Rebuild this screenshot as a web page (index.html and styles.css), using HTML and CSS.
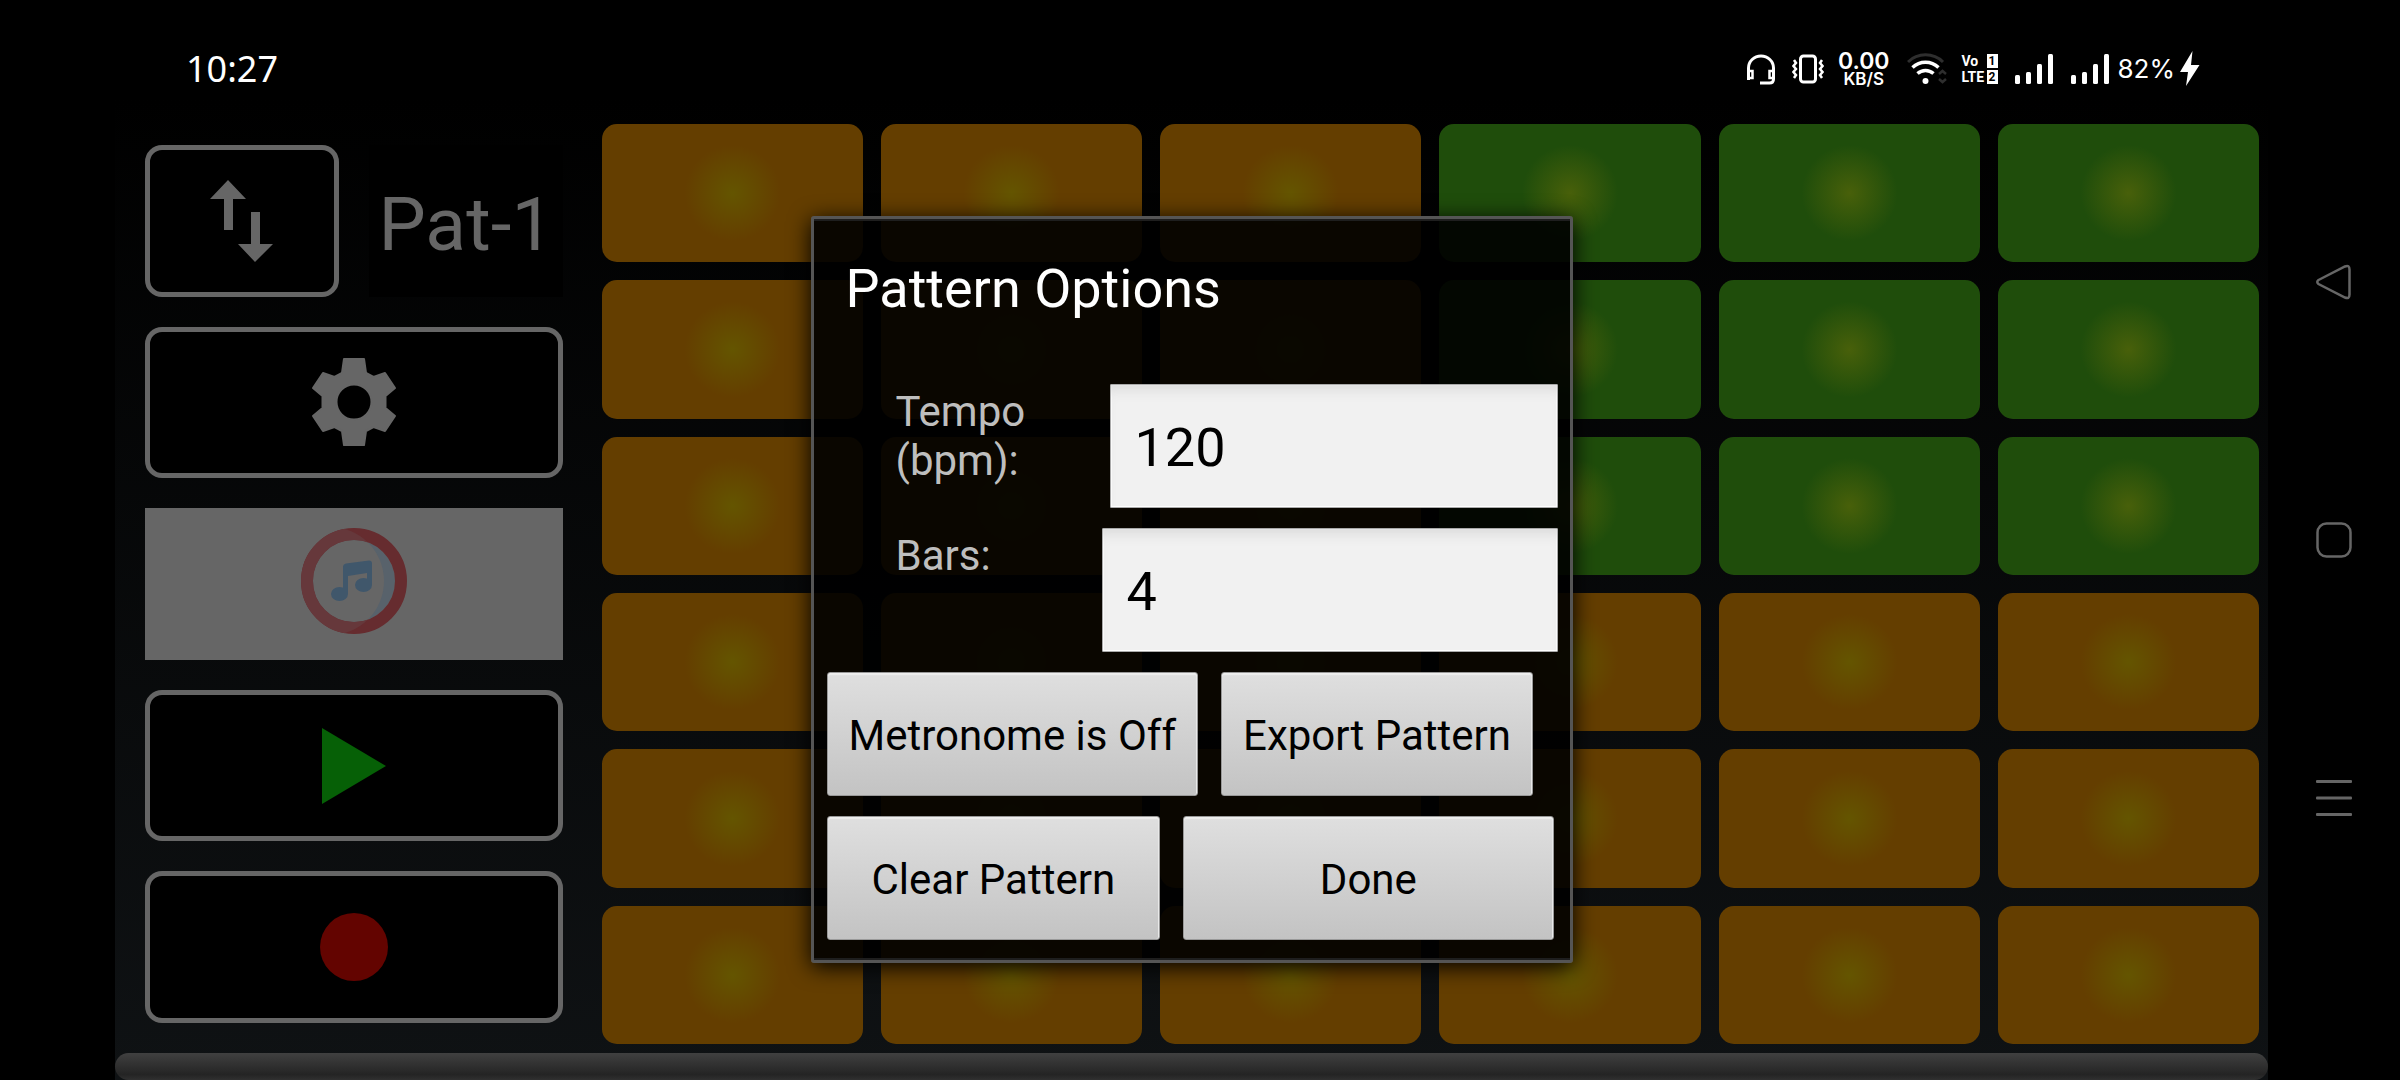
FILE: index.html
```html
<!DOCTYPE html>
<html lang="en">
<head>
<meta charset="utf-8">
<meta name="viewport" content="width=device-width, initial-scale=1">
<title>Pattern Options</title>
<link rel="stylesheet" href="styles.css">
</head>
<body>
<div class="phone">
  <header class="status">
    <time class="clock">10:27</time>
    <div class="indicators">
      <svg class="ind-headset" width="30" height="32" viewBox="0 0 30 32" fill="none" stroke="#fff" stroke-width="3">
        <path d="M2.500 27V15a12.500 12 0 0 1 25 0v11q0 4-4 4H14"/>
        <path d="M2.500 18h4v7h-4zM27.500 18h-4v7h4z" stroke-width="2.500"/>
      </svg>
      <svg class="ind-vibrate" width="32" height="30" viewBox="0 0 32 30" fill="none" stroke="#fff">
        <rect x="8.500" y="2" width="15" height="26" rx="3" stroke-width="3"/>
        <path d="M2 6l2 3-2.500 3L4 15l-2.500 3L4 21l-2 3M30 6l-2 3 2.500 3L28 15l2.500 3L28 21l2 3" stroke-width="2.500"/>
      </svg>
      <div class="speed"><span class="speed-value">0.00</span><span class="speed-unit">KB/S</span></div>
      <svg class="ind-wifi" width="40" height="32" viewBox="0 0 40 32" fill="none" stroke="#fff" stroke-width="3">
        <path d="M1 9a25 25 0 0 1 35 0" stroke="#2e2e2e"/>
        <path d="M5.500 14.500a19 19 0 0 1 26 0" stroke-width="3.500"/>
        <path d="M10.500 20.500a12 12 0 0 1 16 0" stroke-width="3.500"/>
        <circle cx="18.500" cy="28" r="3" fill="#fff" stroke="none"/>
        <path d="M32 21l3.500-3 3.500 3M32 26l3.500 3 3.500-3" stroke="#2e2e2e" stroke-width="2.500"/>
      </svg>
      <div class="volte">
        <span>Vo</span><span class="sim">1</span>
        <span>LTE</span><span class="sim">2</span>
      </div>
      <svg class="ind-signal" width="38" height="30" viewBox="0 0 38 30" fill="#fff">
        <rect y="21" width="5" height="9" rx="1.500"/><rect x="11" y="18" width="5" height="12" rx="1.500"/><rect x="22" y="10" width="5" height="20" rx="1.500"/><rect x="33" width="5" height="30" rx="1.500"/>
      </svg>
      <svg class="ind-signal" width="38" height="30" viewBox="0 0 38 30" fill="#fff">
        <rect y="21" width="5" height="9" rx="1.500"/><rect x="11" y="18" width="5" height="12" rx="1.500"/><rect x="22" y="10" width="5" height="20" rx="1.500"/><rect x="33" width="5" height="30" rx="1.500"/>
      </svg>
      <span class="battery">82%</span>
      <svg width="20" height="36" viewBox="0 0 20 36" fill="#fff"><path d="M12.500 0L0 21h8L6 35 19.500 14H11z"/></svg>
    </div>
  </header>

  <main class="app">
    <div class="board">
      <aside class="tools">
        <div class="tool-pair">
          <button class="tool" type="button" aria-label="Switch pattern">
            <svg width="70" height="90" viewBox="0 0 70 90" fill="#666"><path d="M21 4l18 19H26v31h-9V23H3zM44 36h9v32h13L48 86 31 68h13z"/></svg>
          </button>
          <div class="pattern-name">Pat-1</div>
        </div>
        <button class="tool" type="button" aria-label="Settings">
          <svg width="90" height="90" viewBox="-45 -45 90 90"><path fill="#666" fill-rule="evenodd" stroke="#666" stroke-width="2" stroke-linejoin="round" d="M-10-43H10L12-29 19.500-25 31-29 41-14 31.500-6V6L41 14 31 29 19.500 25 12 29 10 43H-10L-12 29-19.500 25-31 29-41 14-31.500 6V-6L-41-14-31-29-19.500-25-12-29zM17.500 0A17.500 17.500 0 1 0-17.500 0A17.500 17.500 0 1 0 17.500 0z"/></svg>
        </button>
        <button class="tool tool-music" type="button" aria-label="Songs">
          <svg width="106" height="112" viewBox="0 0 106 112">
            <defs><clipPath id="lit"><circle cx="29" cy="53" r="54"/></clipPath></defs>
            <circle cx="53" cy="53" r="41" fill="#58626b"/>
            <circle cx="53" cy="53" r="47" fill="none" stroke="#662c2f" stroke-width="12"/>
            <g clip-path="url(#lit)">
              <circle cx="53" cy="53" r="41" fill="#666"/>
              <circle cx="53" cy="53" r="47" fill="none" stroke="#66383b" stroke-width="12"/>
            </g>
            <g fill="#40576b">
              <ellipse cx="38.500" cy="66" rx="8.500" ry="7"/>
              <ellipse cx="62.500" cy="57" rx="8.500" ry="7"/>
              <path d="M42 66V39q0-3 3-3.500l23-3q3 0 3 3V57h-5V45l-19 3v18z"/>
            </g>
          </svg>
        </button>
        <button class="tool" type="button" aria-label="Play">
          <svg width="64" height="76" viewBox="0 0 64 76"><path fill="#066006" d="M0 0l64 38L0 76z"/></svg>
        </button>
        <button class="tool" type="button" aria-label="Record">
          <svg width="68" height="68" viewBox="0 0 68 68"><circle cx="34" cy="34" r="34" fill="#630400"/></svg>
        </button>
      </aside>

      <div class="pads">
        <i class="pad"></i><i class="pad"></i><i class="pad"></i><i class="pad green"></i><i class="pad green"></i><i class="pad green"></i>
        <i class="pad"></i><i class="pad"></i><i class="pad"></i><i class="pad green"></i><i class="pad green"></i><i class="pad green"></i>
        <i class="pad"></i><i class="pad"></i><i class="pad"></i><i class="pad green"></i><i class="pad green"></i><i class="pad green"></i>
        <i class="pad"></i><i class="pad"></i><i class="pad"></i><i class="pad"></i><i class="pad"></i><i class="pad"></i>
        <i class="pad"></i><i class="pad"></i><i class="pad"></i><i class="pad"></i><i class="pad"></i><i class="pad"></i>
        <i class="pad"></i><i class="pad"></i><i class="pad"></i><i class="pad"></i><i class="pad"></i><i class="pad"></i>
      </div>
    </div>
    <div class="progress"></div>

    <div class="overlay">
      <form class="dialog" role="dialog" aria-labelledby="dialog-title">
        <h1 class="dialog-title" id="dialog-title">Pattern Options</h1>
        <div class="rows">
          <div class="field">
            <label class="field-label" for="tempo">Tempo<br>(bpm):</label>
            <input class="field-input" id="tempo" type="text" inputmode="numeric" value="120">
          </div>
          <div class="field">
            <label class="field-label field-label-short" for="bars">Bars:</label>
            <input class="field-input" id="bars" type="text" inputmode="numeric" value="4">
          </div>
          <div class="actions">
            <button class="action" type="button">Metronome is Off</button>
            <button class="action" type="button">Export Pattern</button>
          </div>
          <div class="actions">
            <button class="action action-clear" type="button">Clear Pattern</button>
            <button class="action action-done" type="button">Done</button>
          </div>
        </div>
      </form>
    </div>
  </main>

  <nav class="nav">
    <button class="nav-button" type="button" aria-label="Back">
      <svg width="36" height="36" viewBox="0 0 36 36" fill="none" stroke="#666" stroke-width="2.500"><path d="M2.500 16L29 2.500q4.500-2 4.500 3v25q0 5-4.500 3L2.500 20q-2.500-2 0-4z"/></svg>
    </button>
    <button class="nav-button" type="button" aria-label="Home">
      <svg width="36" height="36" viewBox="0 0 36 36" fill="none" stroke="#666" stroke-width="2.500"><rect x="1.500" y="1.500" width="33" height="33" rx="9"/></svg>
    </button>
    <button class="nav-button" type="button" aria-label="Recent apps">
      <svg width="36" height="36" viewBox="0 0 36 36" fill="#666"><rect width="36" height="3" y="0" rx="1"/><rect width="36" height="3" y="16.500" rx="1"/><rect width="36" height="3" y="33" rx="1"/></svg>
    </button>
  </nav>
</div>
</body>
</html>
```
FILE: styles.css
```css
* {
  box-sizing: border-box;
}

body {
  margin: 0;
  background: #000;
  color: #fff;
  font-family: Roboto, "Liberation Sans", sans-serif;
}

button {
  margin: 0;
  padding: 0;
  border: 0;
  background: none;
  color: inherit;
  font: inherit;
  cursor: pointer;
}

svg {
  display: block;
  flex: none;
}

.phone {
  display: grid;
  grid-template: 98px minmax(0, 1fr) / 115px minmax(0, 1fr) 132px;
  min-height: 100vh;
}

/* Status bar */

.status {
  grid-area: 1 / 1 / 2 / 4;
  display: flex;
  align-items: center;
  justify-content: space-between;
  padding: 40px 200px 0 186px;
  font-family: Inter, Roboto, sans-serif;
}

.clock {
  font-family: "Noto Sans", sans-serif;
  font-size: 36px;
  line-height: 40px;
}

.indicators {
  display: flex;
  align-items: center;
}

.ind-headset {
  margin-right: 16px;
}

.ind-vibrate {
  margin-right: 14px;
}

.speed {
  display: flex;
  flex-direction: column;
  align-items: center;
  margin-right: 17px;
  font-weight: 600;
}

.speed-value {
  font-size: 23px;
  line-height: 20px;
}

.speed-unit {
  font-size: 17px;
  line-height: 16px;
}

.ind-wifi {
  margin-right: 15px;
}

.volte {
  display: grid;
  grid-template: 14px 14px / 24px 11px;
  gap: 2px 1px;
  margin-right: 17px;
  font: bold 14px/14px Roboto, "Liberation Sans", sans-serif;
}

.sim {
  background: #fff;
  color: #000;
  font-size: 12px;
  text-align: center;
}

.ind-signal {
  margin-right: 18px;
}

.ind-signal + .battery {
  margin-left: -9px;
}

.battery {
  margin-right: 5px;
  font-size: 26px;
  line-height: 32px;
}

/* Drum machine */

.app {
  grid-area: 2 / 2;
  position: relative;
  display: flex;
  flex-direction: column;
  padding-top: 17px;
  background: linear-gradient(#000, #0f1214);
}

.board {
  flex: 1;
  display: grid;
  grid-template-columns: minmax(0, 418fr) minmax(0, 1657fr);
  gap: 39px;
  padding: 9px 9px 9px 30px;
}

.tools {
  display: grid;
  grid-template-rows: repeat(5, minmax(0, 1fr));
  gap: 30px;
  padding: 21px 0;
}

.tool-pair {
  display: grid;
  grid-template-columns: 1fr 1fr;
  gap: 30px;
}

.tool {
  display: flex;
  align-items: center;
  justify-content: center;
  border: 5px solid #666;
  border-radius: 17px;
  background: #000;
}

.tool-music {
  border: 0;
  border-radius: 0;
  background: #666;
}

.pattern-name {
  display: flex;
  align-items: center;
  justify-content: center;
  padding-top: 6px;
  background: #000;
  color: #666;
  font-size: 75px;
  line-height: 88px;
}

.pads {
  display: grid;
  grid-template: repeat(6, minmax(0, 1fr)) / repeat(6, minmax(0, 1fr));
  gap: 18px;
}

.pad {
  border-radius: 15px;
  background: radial-gradient(circle, #645500, #643e00 48px);
}

.pad.green {
  background: radial-gradient(circle, #48600a, #1f4d0b 48px);
}

.progress {
  height: 27px;
  border-radius: 14px;
  background: linear-gradient(#404040, #242424 80%, #303030);
}

/* Pattern options dialog */

.overlay {
  position: absolute;
  inset: 0;
  display: flex;
  align-items: center;
  justify-content: center;
}

.dialog {
  width: 100%;
  max-width: 762px;
  padding: 38px 0 20px;
  border: 3px solid #555;
  border-radius: 3px;
  background: rgba(0, 0, 0, 0.9);
  box-shadow: 0 4px 22px #000, inset 0 2px #1e1e1e, inset 0 -2px #1e1e1e;
}

.dialog-title {
  margin: 0 0 63px;
  padding: 0 32px;
  font-size: 54px;
  line-height: 64px;
  font-weight: 400;
}

.rows {
  display: grid;
  grid-template-columns: minmax(0, 1fr);
  grid-auto-rows: 124px;
  gap: 20px;
}

.field {
  display: flex;
  padding: 0 12px 0 82px;
}

.field-label {
  flex: 0 0 214px;
  padding-top: 3px;
  color: #bebebe;
  font-size: 42px;
  line-height: 49px;
}

.field-label-short {
  flex-basis: 206px;
}

.field-input {
  flex: 1;
  min-width: 0;
  padding: 4px 24px 0;
  border: 1px solid #aaa;
  border-radius: 1px;
  outline: 0;
  background: #f1f1f1;
  box-shadow: inset 0 12px 14px -8px #d8d8d8, inset 0 0 0 1px #fff;
  color: #000;
  font: 54px/64px Roboto, "Liberation Sans", sans-serif;
}

.actions {
  display: flex;
  gap: 23px;
  padding: 0 16px 0 13px;
}

.action {
  padding: 3px 21px 0;
  border: 1px solid #999;
  border-radius: 3px;
  background: linear-gradient(to bottom, #dfdfdf, #c3c3c3);
  box-shadow: inset 0 2px 1px #eee, inset -1px 0 #e8e8e8;
  color: #000;
  font-size: 42px;
  line-height: 49px;
  white-space: nowrap;
}

.action-clear {
  flex: 331 1 0;
}

.action-done {
  flex: 373 1 0;
}

/* System navigation */

.nav {
  grid-area: 1 / 3 / 3 / 4;
  display: flex;
  flex-direction: column;
  align-items: center;
  justify-content: center;
  gap: 222px;
}
```
